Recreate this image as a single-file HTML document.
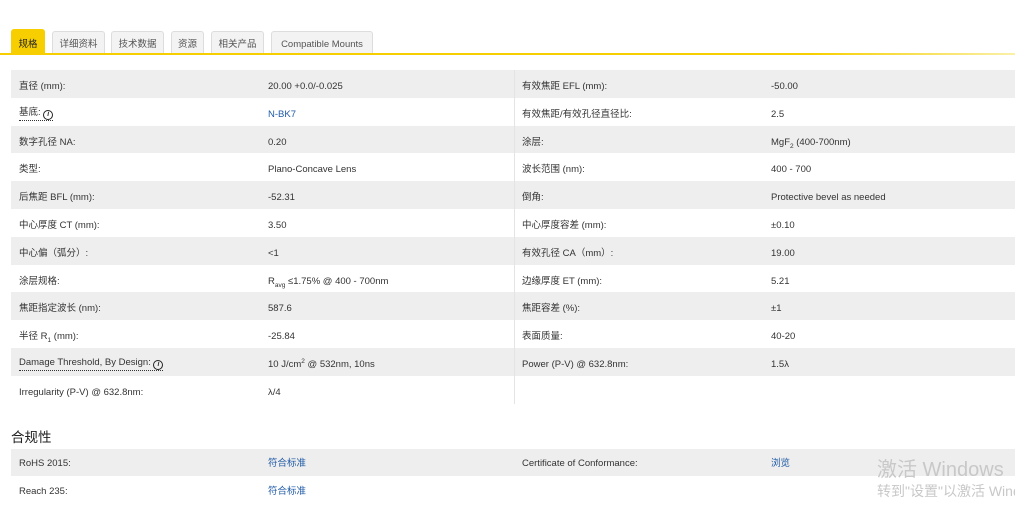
<!DOCTYPE html>
<html><head><meta charset="utf-8"><style>
*{margin:0;padding:0;box-sizing:border-box}
body{width:1015px;height:521px;background:#fff;font-family:"Liberation Sans","Noto Sans CJK SC",sans-serif;font-size:9.5px;color:#333;position:relative;overflow:hidden}
.tab{position:absolute;top:31px;height:23px;border:1px solid #ddd;border-bottom:none;background:#f3f3f3;color:#555;font-size:9.5px;line-height:26px;text-align:center;border-radius:3px 3px 0 0}
.tab.on{background:#f7cf00;border-color:#f7cf00;color:#222;top:29px;height:25px;line-height:29px}
.line{position:absolute;left:0;top:53px;width:1015px;height:2px;background:linear-gradient(90deg,#f7cf00 0,#f7cf00 80%,#faf0a8 100%)}
.row{position:absolute;left:11px;width:1004px;height:27.8px}
.g{background:#eeeeee}
.row span{position:absolute;top:3px;line-height:27.8px;white-space:nowrap}
.a{left:8px}.b{left:257px}.c{left:511px}.d{left:760px}
.lnk{color:#1f5aa6}
.dot{border-bottom:1px dotted #333;line-height:12px!important;top:9px!important}
.i{display:inline-block;width:10px;height:10px;border:1.3px solid #222;border-radius:50%;font-size:7px;line-height:7px;text-align:center;font-weight:bold;vertical-align:-1px}
.vl{position:absolute;left:514px;top:70px;width:1px;height:334px;background:#e4e4e4}
h3{position:absolute;left:11px;top:426px;font-size:13.5px;font-weight:normal;color:#222}
.wm{position:absolute;color:#c8c8c8;white-space:nowrap}
sub,sup{font-size:6.5px;line-height:0}
</style></head><body>
<div class="tab on" style="left:11px;width:34px">规格</div>
<div class="tab" style="left:52px;width:53px">详细资料</div>
<div class="tab" style="left:111px;width:53px">技术数据</div>
<div class="tab" style="left:171px;width:33px">资源</div>
<div class="tab" style="left:211px;width:53px">相关产品</div>
<div class="tab" style="left:271px;width:102px">Compatible Mounts</div>
<div class="line"></div>

<div class="row g" style="top:70px"><span class="a">直径 (mm):</span><span class="b">20.00 +0.0/-0.025</span><span class="c">有效焦距 EFL (mm):</span><span class="d">-50.00</span></div>
<div class="row" style="top:97.8px"><span class="a dot">基底: <i class="i">i</i></span><span class="b lnk">N-BK7</span><span class="c">有效焦距/有效孔径直径比:</span><span class="d">2.5</span></div>
<div class="row g" style="top:125.6px"><span class="a">数字孔径 NA:</span><span class="b">0.20</span><span class="c">涂层:</span><span class="d">MgF<sub>2</sub> (400-700nm)</span></div>
<div class="row" style="top:153.4px"><span class="a">类型:</span><span class="b">Plano-Concave Lens</span><span class="c">波长范围 (nm):</span><span class="d">400 - 700</span></div>
<div class="row g" style="top:181.2px"><span class="a">后焦距 BFL (mm):</span><span class="b">-52.31</span><span class="c">倒角:</span><span class="d">Protective bevel as needed</span></div>
<div class="row" style="top:209px"><span class="a">中心厚度 CT (mm):</span><span class="b">3.50</span><span class="c">中心厚度容差 (mm):</span><span class="d">±0.10</span></div>
<div class="row g" style="top:236.8px"><span class="a">中心偏（弧分）:</span><span class="b">&lt;1</span><span class="c">有效孔径 CA（mm）:</span><span class="d">19.00</span></div>
<div class="row" style="top:264.6px"><span class="a">涂层规格:</span><span class="b">R<sub>avg</sub> ≤1.75% @ 400 - 700nm</span><span class="c">边缘厚度 ET (mm):</span><span class="d">5.21</span></div>
<div class="row g" style="top:292.4px"><span class="a">焦距指定波长 (nm):</span><span class="b">587.6</span><span class="c">焦距容差 (%):</span><span class="d">±1</span></div>
<div class="row" style="top:320.2px"><span class="a">半径 R<sub>1</sub> (mm):</span><span class="b">-25.84</span><span class="c">表面质量:</span><span class="d">40-20</span></div>
<div class="row g" style="top:348px"><span class="a dot">Damage Threshold, By Design: <i class="i">i</i></span><span class="b">10 J/cm<sup>2</sup> @ 532nm, 10ns</span><span class="c">Power (P-V) @ 632.8nm:</span><span class="d">1.5λ</span></div>
<div class="row" style="top:375.8px"><span class="a">Irregularity (P-V) @ 632.8nm:</span><span class="b">λ/4</span></div>
<div class="vl"></div>

<h3>合规性</h3>
<div class="row g" style="top:449px;height:27px"><span class="a" style="top:1px">RoHS 2015:</span><span class="b lnk" style="top:1px">符合标准</span><span class="c" style="top:1px">Certificate of Conformance:</span><span class="d lnk" style="top:1px">浏览</span></div>
<div class="row" style="top:476.5px"><span class="a" style="top:1px">Reach 235:</span><span class="b lnk" style="top:1px">符合标准</span></div>
<div class="wm" style="left:877px;top:453px;font-size:20px">激活 Windows</div>
<div class="wm" style="left:877px;top:481px;font-size:14px">转到"设置"以激活 Windows。</div>
</body></html>
